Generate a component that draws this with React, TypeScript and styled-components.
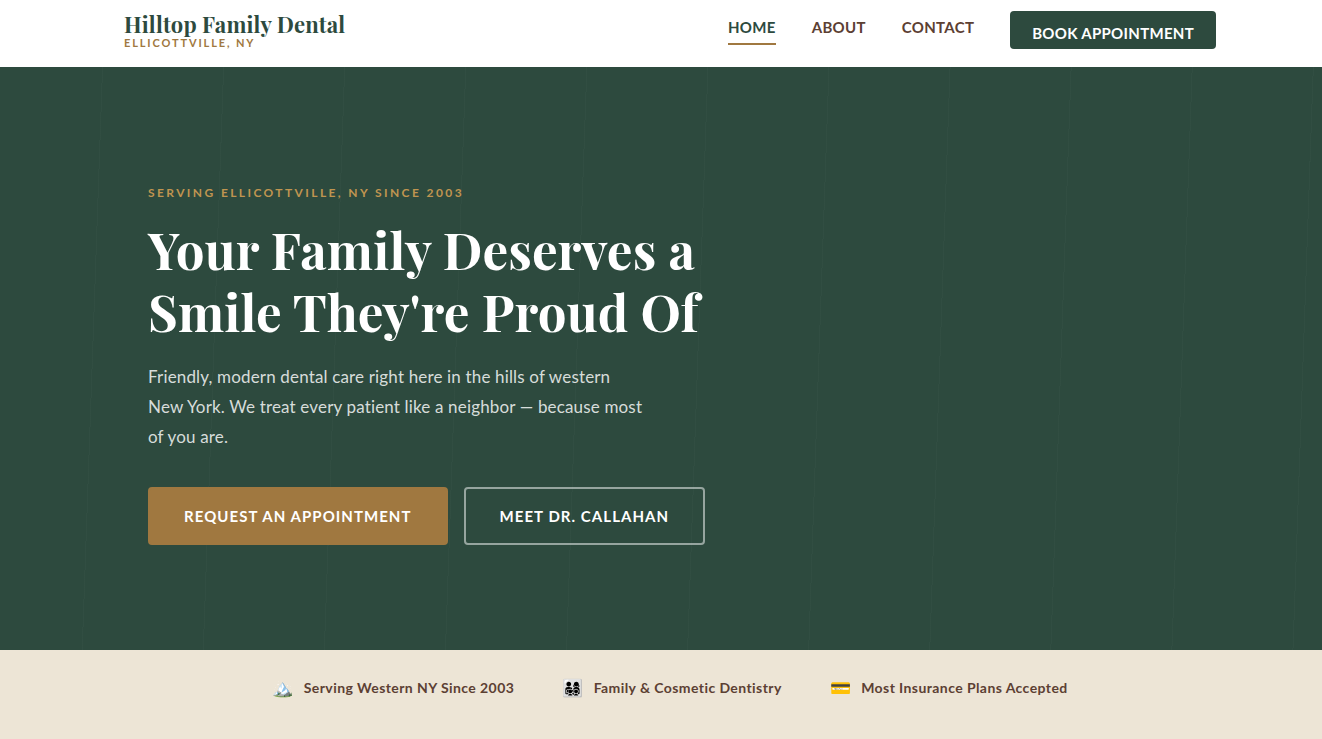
import React from "react";
import styled, { createGlobalStyle } from "styled-components";

const color = {
  forest: "#2d4a3e",
  bronze: "#a07840",
  gold: "#c09550",
  brown: "#5c4033",
  sand: "#ede5d6",
};

const serif = `"Playfair Display", "Liberation Serif", serif`;
const sans = `Lato, "Liberation Sans", sans-serif`;

const GlobalStyle = createGlobalStyle`
  *, *::before, *::after { box-sizing: border-box; }
  body {
    margin: 0;
    background: ${color.sand};
    color: ${color.brown};
    font-family: ${sans};
    letter-spacing: 0.01em;
  }
  h1, p, ul { margin: 0; padding: 0; }
  a { text-decoration: none; }
`;

const Header = styled.header`
  background: #fff;
`;

const HeaderInner = styled.div`
  display: flex;
  justify-content: space-between;
  align-items: flex-start;
  max-width: 1140px;
  margin: 0 auto;
  padding: 11px 15px 18px 33px;
`;

const Brand = styled.a`
  display: flex;
  flex-direction: column;
`;

const BrandName = styled.span`
  font: 700 22px/26px ${serif};
  color: ${color.forest};
`;

const BrandPlace = styled.span`
  font-size: 11px;
  font-weight: 700;
  line-height: 12px;
  letter-spacing: 0.17em;
  text-transform: uppercase;
  color: ${color.bronze};
`;

const Nav = styled.nav`
  display: flex;
  align-items: flex-start;
  gap: 36px;
`;

const NavLink = styled.a<{ $active?: boolean }>`
  padding: 4px 0;
  border-bottom: 2px solid ${(p) => (p.$active ? color.bronze : "transparent")};
  font-size: 15px;
  font-weight: 700;
  line-height: 24px;
  letter-spacing: 0.02em;
  text-transform: uppercase;
  color: ${(p) => (p.$active ? color.forest : color.brown)};
`;

const BookLink = styled.a`
  padding: 10px 22px 4px;
  border-radius: 4px;
  background: ${color.forest};
  font-size: 15px;
  font-weight: 700;
  line-height: 24px;
  letter-spacing: 0.02em;
  text-transform: uppercase;
  color: #fff;
`;

const Hero = styled.section`
  background:
    repeating-linear-gradient(
      92deg,
      transparent 0 102px,
      rgba(255, 255, 255, 0.02) 102px 103px,
      transparent 103px 121px
    ),
    ${color.forest};
`;

const HeroInner = styled.div`
  max-width: 1100px;
  margin: 0 auto;
  padding: 116px 37px 105px;
`;

const Eyebrow = styled.p`
  font-size: 12px;
  font-weight: 700;
  line-height: 20px;
  letter-spacing: 0.2em;
  text-transform: uppercase;
  color: ${color.gold};
`;

const Title = styled.h1`
  max-width: 620px;
  margin-top: 15px;
  font: 700 51px/62px ${serif};
  color: #fff;
`;

const Lead = styled.p`
  max-width: 500px;
  margin-top: 20px;
  font-size: 17px;
  line-height: 30px;
  color: rgba(255, 255, 255, 0.82);
`;

const Actions = styled.div`
  display: flex;
  flex-wrap: wrap;
  gap: 16px;
  margin-top: 35px;
`;

const Action = styled.a<{ $outline?: boolean }>`
  padding: 15px 34px;
  border: 2px solid
    ${(p) => (p.$outline ? "rgba(255, 255, 255, 0.5)" : color.bronze)};
  border-radius: 4px;
  background: ${(p) => (p.$outline ? "transparent" : color.bronze)};
  font-size: 15px;
  font-weight: 700;
  line-height: 24px;
  letter-spacing: 0.07em;
  text-transform: uppercase;
  color: #fff;
`;

const TrustBar = styled.ul`
  display: flex;
  flex-wrap: wrap;
  justify-content: center;
  gap: 48px;
  padding: 24px 24px 36px 42px;
  background: ${color.sand};
  list-style: none;
`;

const TrustItem = styled.li`
  display: flex;
  align-items: center;
  gap: 10px;
  font-size: 14px;
  font-weight: 700;
  line-height: 28px;
  letter-spacing: 0.03em;
`;

const TrustIcon = styled.span`
  font-size: 17px;
`;

const links = ["Home", "About", "Contact"];

const trust = [
  { icon: "🏔️", label: "Serving Western NY Since 2003" },
  { icon: "👨‍👩‍👧‍👦", label: "Family & Cosmetic Dentistry" },
  { icon: "💳", label: "Most Insurance Plans Accepted" },
];

export default function App() {
  return (
    <>
      <GlobalStyle />
      <Header>
        <HeaderInner>
          <Brand href="#home">
            <BrandName>Hilltop Family Dental</BrandName>
            <BrandPlace>Ellicottville, NY</BrandPlace>
          </Brand>
          <Nav>
            {links.map((label) => (
              <NavLink
                key={label}
                href={`#${label.toLowerCase()}`}
                $active={label === "Home"}
              >
                {label}
              </NavLink>
            ))}
            <BookLink href="#book">Book Appointment</BookLink>
          </Nav>
        </HeaderInner>
      </Header>
      <main>
        <Hero>
          <HeroInner>
            <Eyebrow>Serving Ellicottville, NY Since 2003</Eyebrow>
            <Title>Your Family Deserves a Smile They're Proud Of</Title>
            <Lead>
              Friendly, modern dental care right here in the hills of western
              New York. We treat every patient like a neighbor — because most of
              you are.
            </Lead>
            <Actions>
              <Action href="#book">Request an Appointment</Action>
              <Action href="#about" $outline>
                Meet Dr. Callahan
              </Action>
            </Actions>
          </HeroInner>
        </Hero>
        <TrustBar>
          {trust.map(({ icon, label }) => (
            <TrustItem key={label}>
              <TrustIcon aria-hidden="true">{icon}</TrustIcon>
              {label}
            </TrustItem>
          ))}
        </TrustBar>
      </main>
    </>
  );
}
